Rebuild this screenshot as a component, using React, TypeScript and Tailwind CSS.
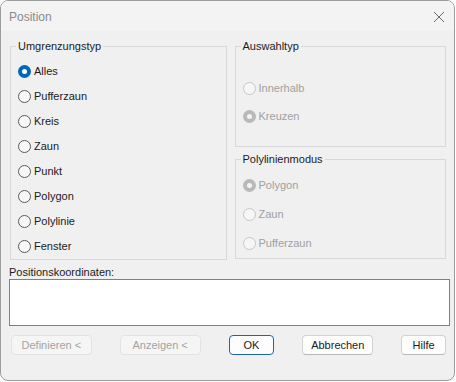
import React from "react";

type RadioState = { label: string; checked?: boolean; disabled?: boolean };

function RadioDot({ checked, disabled }: { checked?: boolean; disabled?: boolean }) {
  if (checked && !disabled) {
    return (
      <span className="flex w-[13px] h-[13px] shrink-0 items-center justify-center rounded-full bg-[#0067c0]">
        <span className="block w-[5px] h-[5px] rounded-full bg-white" />
      </span>
    );
  }
  if (checked && disabled) {
    return (
      <span className="flex w-[13px] h-[13px] shrink-0 items-center justify-center rounded-full bg-[#b9b9b9]">
        <span className="block w-[5px] h-[5px] rounded-full bg-[#f4f4f4]" />
      </span>
    );
  }
  if (disabled) {
    return <span className="block w-[13px] h-[13px] shrink-0 rounded-full border border-[#c6c6c6] bg-[#f6f6f6]" />;
  }
  return <span className="block w-[13px] h-[13px] shrink-0 rounded-full border border-[#5a5a5a] bg-[#f7f7f7]" />;
}

function Radio({ item, rowClass }: { item: RadioState; rowClass: string }) {
  return (
    <div className={`flex items-center gap-[3px] ${rowClass}`}>
      <RadioDot checked={item.checked} disabled={item.disabled} />
      <span className={item.disabled ? "text-[#a0a0a0]" : "text-[#1b1b1b]"}>{item.label}</span>
    </div>
  );
}

function Legend({ children }: { children: React.ReactNode }) {
  return <legend className="ml-[-2px] px-[2px] leading-[12px] h-[12px] text-[#1b1b1b]">{children}</legend>;
}

function Button({ label, width, disabled, primary }: { label: string; width: string; disabled?: boolean; primary?: boolean }) {
  const base = "h-[20px] rounded-[4px] flex items-center justify-center border";
  let cls = "";
  if (disabled) cls = "bg-[#f5f5f5] border-[#e3e3e3] text-[#a3a3a3]";
  else if (primary) cls = "bg-[#fdfdfd] border-[#1d64b0] text-[#1b1b1b]";
  else cls = "bg-[#fdfdfd] border-[#d2d2d2] border-b-[#b8b8b8] text-[#1b1b1b]";
  return <div className={`${base} ${cls} ${width}`}>{label}</div>;
}

export default function App() {
  const left: RadioState[] = [
    { label: "Alles", checked: true },
    { label: "Pufferzaun" },
    { label: "Kreis" },
    { label: "Zaun" },
    { label: "Punkt" },
    { label: "Polygon" },
    { label: "Polylinie" },
    { label: "Fenster" },
  ];
  const auswahl: RadioState[] = [
    { label: "Innerhalb", disabled: true },
    { label: "Kreuzen", checked: true, disabled: true },
  ];
  const poly: RadioState[] = [
    { label: "Polygon", checked: true, disabled: true },
    { label: "Zaun", disabled: true },
    { label: "Pufferzaun", disabled: true },
  ];

  return (
    <div
      className="w-[455px] h-[381px] rounded-[8px] border border-[#9c9c9c] bg-[#f0f0f0] overflow-hidden flex flex-col text-[11px]"
      style={{ fontFamily: '"Liberation Sans", Arial, sans-serif' }}
    >
      {/* Title bar */}
      <div className="h-[30px] shrink-0 bg-[#f3f3f3] flex items-center justify-between pl-[8px] pr-[8px]">
        <span className="text-[12px] text-[#8a8a8a] mt-[1px]">Position</span>
        <svg width="12" height="12" viewBox="0 0 12 12" className="mr-[1px] mt-[1px]">
          <path d="M1 1 L11 11 M11 1 L1 11" stroke="#6a6a6a" strokeWidth="1" fill="none" />
        </svg>
      </div>

      {/* Body */}
      <div className="flex flex-col px-[8px] pt-[9px]">
        <div className="flex gap-[8px] pl-[1px]">
          {/* Left group */}
          <fieldset className="w-[218px] border border-[#d8d8d8] pl-[7px] pt-[7px] pb-0">
            <Legend>Umgrenzungstyp</Legend>
            <div className="flex flex-col">
              {left.map((it) => (
                <Radio key={it.label} item={it} rowClass="h-[25px]" />
              ))}
            </div>
          </fieldset>

          {/* Right column */}
          <div className="w-[213px] flex flex-col gap-[6px]">
            <fieldset className="border border-[#d8d8d8] pl-[7px] pt-[22px] pb-[16px]">
              <Legend>Auswahltyp</Legend>
              <div className="flex flex-col">
                {auswahl.map((it) => (
                  <Radio key={it.label} item={it} rowClass="h-[28px]" />
                ))}
              </div>
            </fieldset>
            <fieldset className="border border-[#d8d8d8] pl-[7px] pt-[6px] pb-0">
              <Legend>Polylinienmodus</Legend>
              <div className="flex flex-col">
                {poly.map((it) => (
                  <Radio key={it.label} item={it} rowClass="h-[29px]" />
                ))}
              </div>
            </fieldset>
          </div>
        </div>

        <div className="mt-[5px] h-[14px] leading-[14px] text-[#1b1b1b]">Positionskoordinaten:</div>
        <div className="w-[441px] h-[47px] bg-white border border-[#7f7f7f]" />

        <div className="flex gap-[28px] mt-[9px] pl-[2px]">
          <Button label="Definieren <" width="w-[81px]" disabled />
          <Button label="Anzeigen <" width="w-[81px]" disabled />
          <Button label="OK" width="w-[46px]" primary />
          <Button label="Abbrechen" width="w-[71px]" />
          <Button label="Hilfe" width="w-[45px]" />
        </div>
      </div>
    </div>
  );
}
